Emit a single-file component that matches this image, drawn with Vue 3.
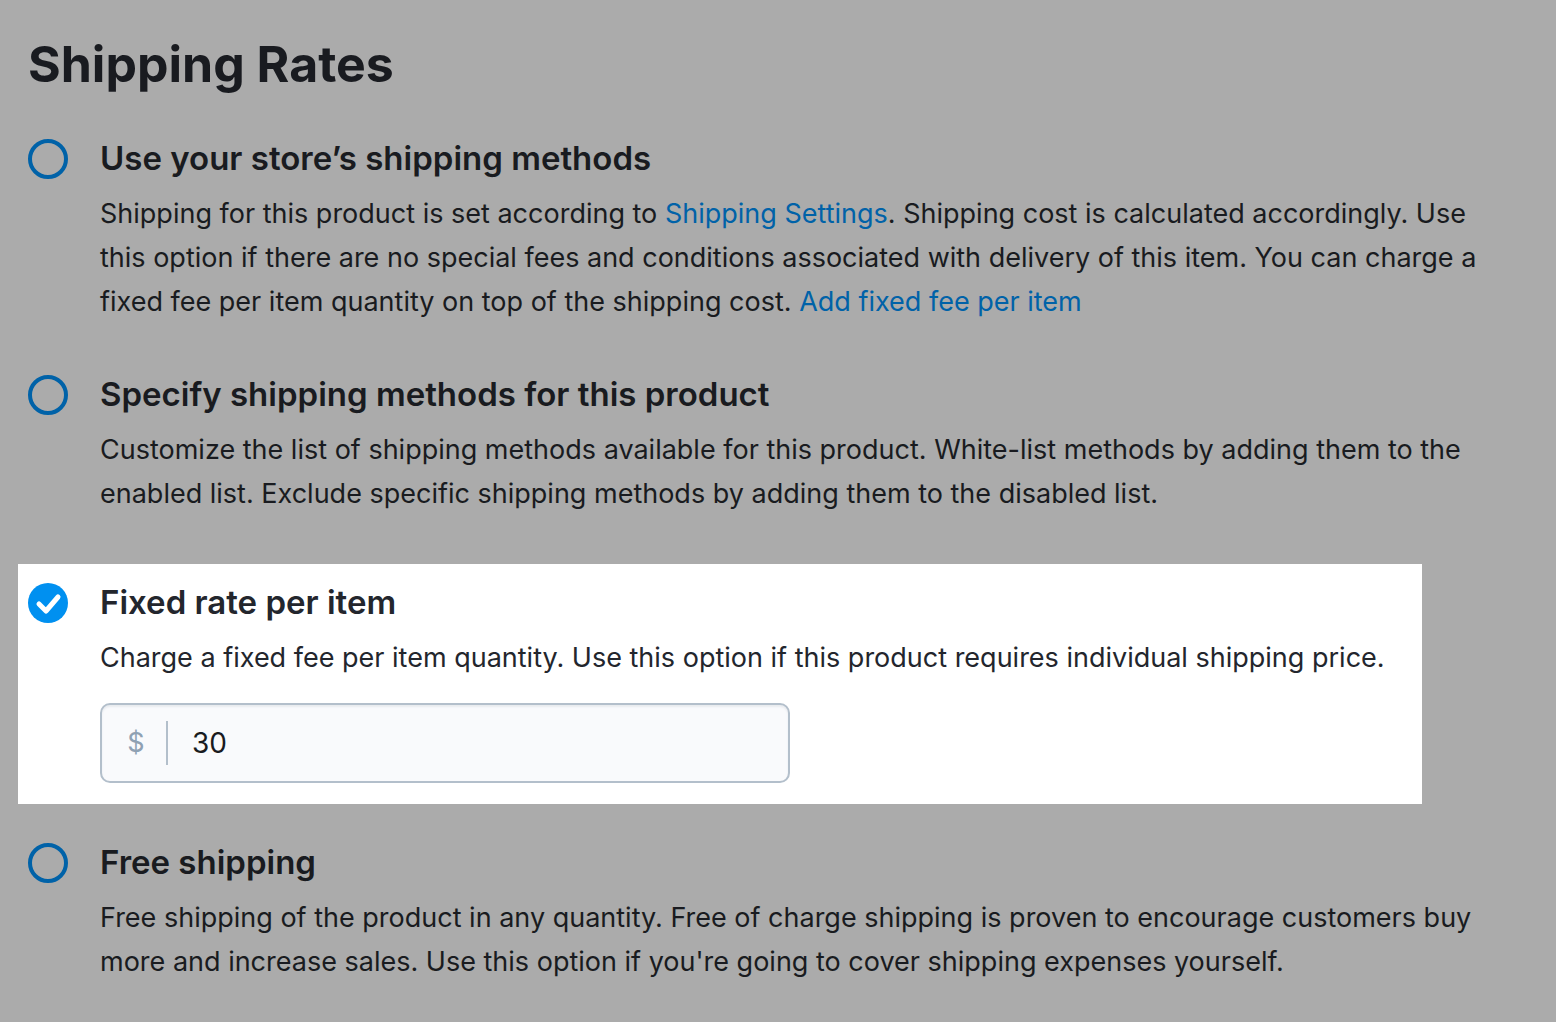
<script setup>
import { ref } from 'vue'

const method = ref('fixed')
const rate = ref('30')
</script>

<template>
  <main class="page">
    <h1>Shipping Rates</h1>
    <form class="options" @submit.prevent>
      <section class="option">
        <input id="store" v-model="method" class="radio" type="radio" name="method" value="store" />
        <div class="body">
          <label class="title" for="store">Use your store’s shipping methods</label>
          <p>Shipping for this product is set according to <a href="#settings">Shipping Settings</a>. Shipping cost is calculated accordingly. Use this option if there are no special fees and conditions associated with delivery of this item. You can charge a fixed fee per item quantity on top of the shipping cost. <a href="#fee">Add fixed fee per item</a></p>
        </div>
      </section>

      <section class="option">
        <input id="specify" v-model="method" class="radio" type="radio" name="method" value="specify" />
        <div class="body">
          <label class="title" for="specify">Specify shipping methods for this product</label>
          <p>Customize the list of shipping methods available for this product. White-list methods by adding them to the enabled list. Exclude specific shipping methods by adding them to the disabled list.</p>
        </div>
      </section>

      <section class="option highlighted">
        <span class="check">
          <input id="fixed" v-model="method" class="radio" type="radio" name="method" value="fixed" />
          <svg viewBox="0 0 40 40" aria-hidden="true"><path d="M11 21l7 7L30 14" /></svg>
        </span>
        <div class="body">
          <label class="title" for="fixed">Fixed rate per item</label>
          <p>Charge a fixed fee per item quantity. Use this option if this product requires individual shipping price.</p>
          <div class="field">
            <label class="currency" for="rate">$</label>
            <input id="rate" v-model="rate" type="text" inputmode="decimal" />
          </div>
        </div>
      </section>

      <section class="option">
        <input id="free" v-model="method" class="radio" type="radio" name="method" value="free" />
        <div class="body">
          <label class="title" for="free">Free shipping</label>
          <p>Free shipping of the product in any quantity. Free of charge shipping is proven to encourage customers buy more and increase sales. Use this option if you're going to cover shipping expenses yourself.</p>
        </div>
      </section>
    </form>
  </main>
</template>

<style>
body {
  margin: 0;
  background: #ababab;
}
</style>

<style scoped>
.page {
  box-sizing: border-box;
  min-height: 100vh;
  padding: 32px 56px 0 18px;
  color: #191b20;
  font-family: Inter, sans-serif;
}
h1 {
  margin: 0 0 40px 10px;
  font-size: 50px;
  line-height: 64px;
  font-weight: 700;
}
.option {
  display: flex;
  gap: 32px;
  margin-bottom: 48px;
  padding-left: 10px;
}
.body {
  flex: 1;
}
.radio {
  display: block;
  appearance: none;
  box-sizing: border-box;
  flex: none;
  width: 40px;
  height: 40px;
  margin: 3px 0 0;
  border: 4px solid #0062a8;
  border-radius: 50%;
}
.title {
  display: block;
  font-size: 33px;
  line-height: 44px;
  font-weight: 600;
}
p {
  margin: 12px 0 0;
  font-size: 27px;
  line-height: 44px;
}
a {
  color: #0062a8;
  text-decoration: none;
}
.highlighted {
  margin: 0 78px 36px 0;
  padding: 16px 10px 21px;
  background: #fff;
  color: #23262d;
}
.check {
  position: relative;
  width: 40px;
}
.radio:checked {
  border: 0;
  background: #0090f0;
}
.check svg {
  position: absolute;
  top: 3px;
  left: 0;
  width: 40px;
  fill: none;
  stroke: #fff;
  stroke-width: 5;
  stroke-linecap: round;
  stroke-linejoin: round;
  pointer-events: none;
}
.field {
  display: flex;
  align-items: center;
  box-sizing: border-box;
  width: 690px;
  max-width: 100%;
  height: 80px;
  margin-top: 23px;
  border: 2px solid #b3bfcb;
  border-radius: 10px;
  background: #f9fafc;
  box-shadow: inset 0 2px 2px #e8ebef;
}
.currency {
  width: 66px;
  padding-left: 4px;
  box-sizing: border-box;
  border-right: 2px solid #b3bfcb;
  color: #8fa1b3;
  font-size: 27px;
  line-height: 44px;
  text-align: center;
}
.field input {
  flex: 1;
  min-width: 0;
  padding: 0 24px;
  border: 0;
  outline: 0;
  background: transparent;
  color: #191b20;
  font: 28px/44px Inter, sans-serif;
}
</style>
